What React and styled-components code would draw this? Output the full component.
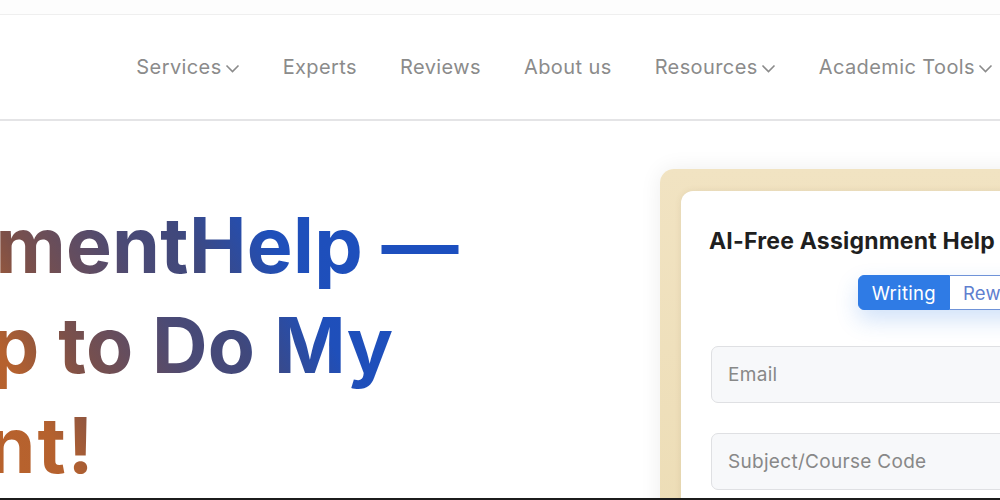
import React from "react";
import styled, { createGlobalStyle } from "styled-components";

const GlobalStyle = createGlobalStyle`
  html, body {
    margin: 0;
    padding: 0;
    background: #fff;
    font-family: "Inter", "Liberation Sans", sans-serif;
  }
  * {
    box-sizing: border-box;
  }
`;

const Page = styled.div`
  width: 1000px;
  height: 500px;
  overflow: hidden;
  border-bottom: 2px solid #1c1c1c;
  display: flex;
  flex-direction: column;
`;

const TopStrip = styled.div`
  height: 15px;
  flex-shrink: 0;
  background: #fdfdfd;
  border-bottom: 1px solid #efefef;
`;

const Header = styled.header`
  height: 106px;
  flex-shrink: 0;
  display: flex;
  align-items: center;
  justify-content: flex-end;
  padding-right: 7px;
  background: #fff;
  border-bottom: 2px solid #e4e4e6;
`;

const Nav = styled.nav`
  display: flex;
  align-items: center;
  gap: 43px;
`;

const NavItem = styled.a`
  display: flex;
  align-items: center;
  gap: 3px;
  font-size: 20px;
  letter-spacing: 0.4px;
  color: #8b8b8b;
  text-decoration: none;
  white-space: nowrap;
  cursor: pointer;

  svg {
    margin-top: 3px;
  }
`;

const Chevron = () => (
  <svg width="15" height="9" viewBox="0 0 15 9" fill="none">
    <path d="M1.5 1.5 L7.5 7.5 L13.5 1.5" stroke="#8b8b8b" strokeWidth="1.6" />
  </svg>
);

const Hero = styled.section`
  flex: 1;
  display: flex;
  align-items: flex-start;
  overflow: hidden;
`;

const HeroText = styled.div`
  width: 660px;
  flex-shrink: 0;
  padding-top: 74px;
`;

const Headline = styled.h1`
  margin: 0 0 0 -381px;
  font-size: 77px;
  font-weight: 700;
  line-height: 100px;
  letter-spacing: 0.3px;
  white-space: nowrap;
  display: inline-block;
  background: linear-gradient(
    60deg,
    #c96a26 0%,
    #b5612e 46%,
    #7c5049 53%,
    #4b4a75 64%,
    #40487c 70%,
    #1f4fba 79%,
    #1b4fc0 100%
  );
  -webkit-background-clip: text;
  background-clip: text;
  color: transparent;
`;

const Line = styled.span`
  display: block;
  margin-left: ${(p) => p.$shift || 0}px;
  letter-spacing: ${(p) => p.$spacing || 0.3}px;
`;

const Frame = styled.div`
  flex-shrink: 0;
  margin-top: 48px;
  padding: 22px 0 0 21px;
  width: 578px;
  border-radius: 14px;
  background: linear-gradient(180deg, #f1e3c2 0%, #ecdcb4 100%);
  box-shadow: 0 0 22px rgba(0, 0, 0, 0.07);
`;

const Card = styled.div`
  background: #fff;
  border-radius: 12px;
  padding: 36px 28px 40px 28px;
  min-height: 400px;
  box-shadow: 0 0 6px rgba(120, 100, 60, 0.12);
`;

const CardTitle = styled.h2`
  margin: 0;
  font-size: 23px;
  font-weight: 700;
  color: #1f1f1f;
  white-space: nowrap;
  letter-spacing: 0.2px;
`;

const Toggle = styled.div`
  display: flex;
  justify-content: center;
  margin-top: 20px;
`;

const ToggleGroup = styled.div`
  display: flex;
  border-radius: 6px;
  box-shadow: 0 10px 22px rgba(47, 123, 229, 0.22);
`;

const ToggleButton = styled.button`
  height: 35px;
  padding: 0 13px;
  font-family: inherit;
  font-size: 18.5px;
  letter-spacing: 0.3px;
  border: 1.5px solid ${(p) => (p.$active ? "#2f7be5" : "#6f93d8")};
  border-left-width: ${(p) => (p.$active ? "1.5px" : "0")};
  background: ${(p) => (p.$active ? "#2f7be5" : "#fff")};
  color: ${(p) => (p.$active ? "#fff" : "#5f7fcf")};
  border-radius: ${(p) => (p.$active ? "6px 0 0 6px" : "0 6px 6px 0")};
  cursor: pointer;
`;

const Fields = styled.div`
  display: flex;
  flex-direction: column;
  gap: 30px;
  margin-top: 36px;
  padding-left: 2px;
`;

const Field = styled.input`
  height: 57px;
  width: 100%;
  padding: 0 16px;
  font-family: inherit;
  font-size: 19px;
  letter-spacing: 0.3px;
  background: #f7f8fa;
  border: 1.5px solid #dfe0e3;
  border-radius: 7px;
  outline: none;

  &::placeholder {
    color: #888;
  }
`;

const navItems = [
  { label: "Services", menu: true },
  { label: "Experts" },
  { label: "Reviews" },
  { label: "About us" },
  { label: "Resources", menu: true },
  { label: "Academic Tools", menu: true },
];

export default function App() {
  return (
    <>
      <GlobalStyle />
      <Page>
        <TopStrip />
        <Header>
          <Nav>
            {navItems.map((item) => (
              <NavItem key={item.label}>
                {item.label}
                {item.menu && <Chevron />}
              </NavItem>
            ))}
          </Nav>
        </Header>
        <Hero>
          <HeroText>
            <Headline>
              <Line>MyAssignmentHelp —</Line>
              <Line $shift={8}>Quick Help to Do My</Line>
              <Line $shift={-24} $spacing={2}>Assignment!</Line>
            </Headline>
          </HeroText>
          <Frame>
            <Card>
              <CardTitle>AI-Free Assignment Help</CardTitle>
              <Toggle>
                <ToggleGroup>
                  <ToggleButton $active>Writing</ToggleButton>
                  <ToggleButton>Rewriting</ToggleButton>
                </ToggleGroup>
              </Toggle>
              <Fields>
                <Field placeholder="Email" />
                <Field placeholder="Subject/Course Code" />
              </Fields>
            </Card>
          </Frame>
        </Hero>
      </Page>
    </>
  );
}
